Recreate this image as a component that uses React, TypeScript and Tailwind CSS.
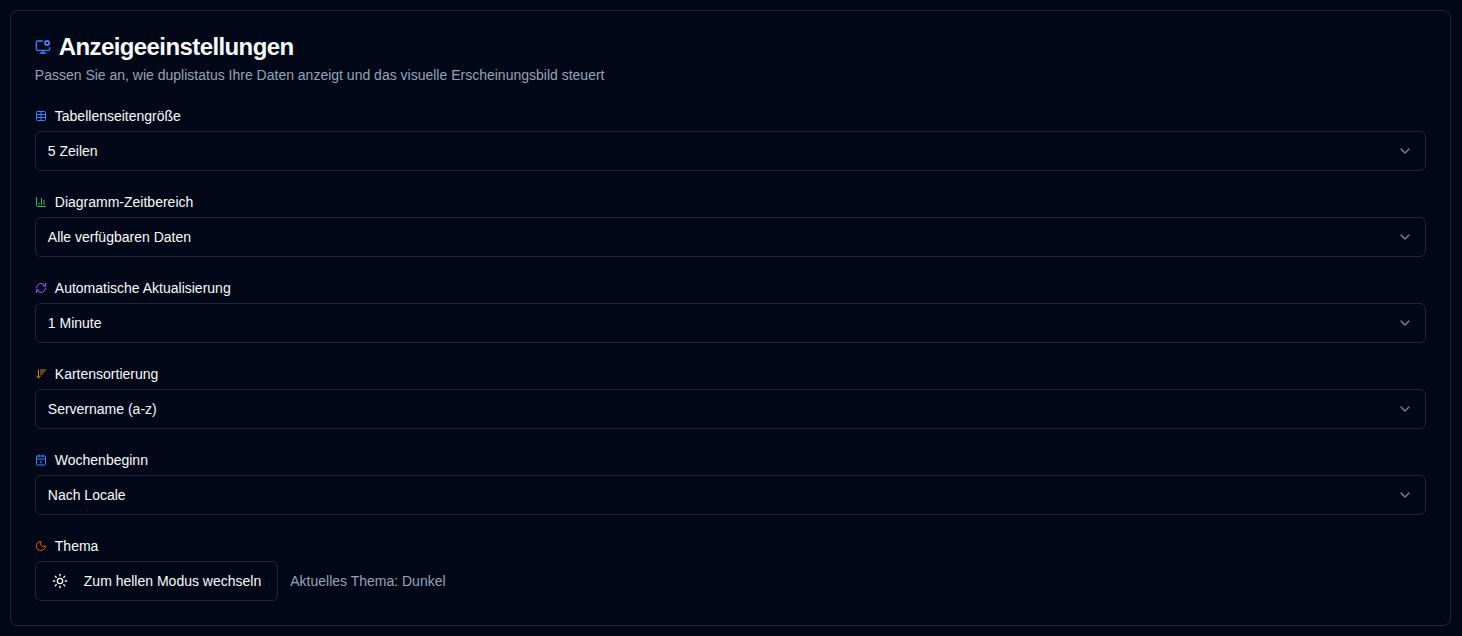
import {
  ArrowDownWideNarrow,
  Calendar1,
  ChartColumn,
  ChevronDown,
  Moon,
  MonitorCog,
  RefreshCw,
  Sun,
  Table,
} from "lucide-react";

const settings = [
  { label: "Tabellenseitengröße", value: "5 Zeilen", Icon: Table, color: "text-[#3b82f6]" },
  { label: "Diagramm-Zeitbereich", value: "Alle verfügbaren Daten", Icon: ChartColumn, color: "text-[#22c55e]" },
  { label: "Automatische Aktualisierung", value: "1 Minute", Icon: RefreshCw, color: "text-[#a855f7]" },
  { label: "Kartensortierung", value: "Servername (a-z)", Icon: ArrowDownWideNarrow, color: "text-[#ca8a04]" },
  { label: "Wochenbeginn", value: "Nach Locale", Icon: Calendar1, color: "text-[#3b82f6]" },
];

export default function App() {
  return (
    <div className="min-h-[636px] bg-[#020817] py-2.5 pr-[10.6px] pl-[9.8px] font-['Liberation_Sans',Arial,sans-serif] text-[#f8fafc]">
      <div className="rounded-lg border border-[#1e293b] p-6 pt-5">
        <h1 className="flex items-center gap-2 text-2xl leading-8 font-bold tracking-[-0.6px]">
          <MonitorCog className="h-4 w-4 text-[#3b82f6]" />
          Anzeigeeinstellungen
        </h1>
        <p className="mt-0.5 text-sm leading-5 text-[#94a3b8]">
          Passen Sie an, wie duplistatus Ihre Daten anzeigt und das visuelle Erscheinungsbild steuert
        </p>

        <div className="mt-6 flex flex-col gap-6">
          {settings.map(({ label, value, Icon, color }) => (
            <div key={label} className="flex flex-col gap-2">
              <label className="flex items-center gap-2 text-sm leading-none font-medium">
                <Icon className={`h-3 w-3 ${color}`} />
                {label}
              </label>
              <button
                type="button"
                role="combobox"
                className="flex h-10 w-full items-center justify-between rounded-md border border-[#1e293b] px-3 text-sm"
              >
                <span>{value}</span>
                <ChevronDown className="h-4 w-4 opacity-50" />
              </button>
            </div>
          ))}

          <div className="flex flex-col gap-2">
            <label className="flex items-center gap-2 text-sm leading-none font-medium">
              <Moon className="h-3 w-3 text-[#ea580c]" />
              Thema
            </label>
            <div className="flex items-center gap-3">
              <button
                type="button"
                className="flex h-10 items-center gap-4 rounded-md border border-[#1e293b] px-4 text-sm font-medium"
              >
                <Sun className="h-4 w-4" />
                Zum hellen Modus wechseln
              </button>
              <span className="text-sm text-[#94a3b8]">Aktuelles Thema: Dunkel</span>
            </div>
          </div>
        </div>
      </div>
    </div>
  );
}
